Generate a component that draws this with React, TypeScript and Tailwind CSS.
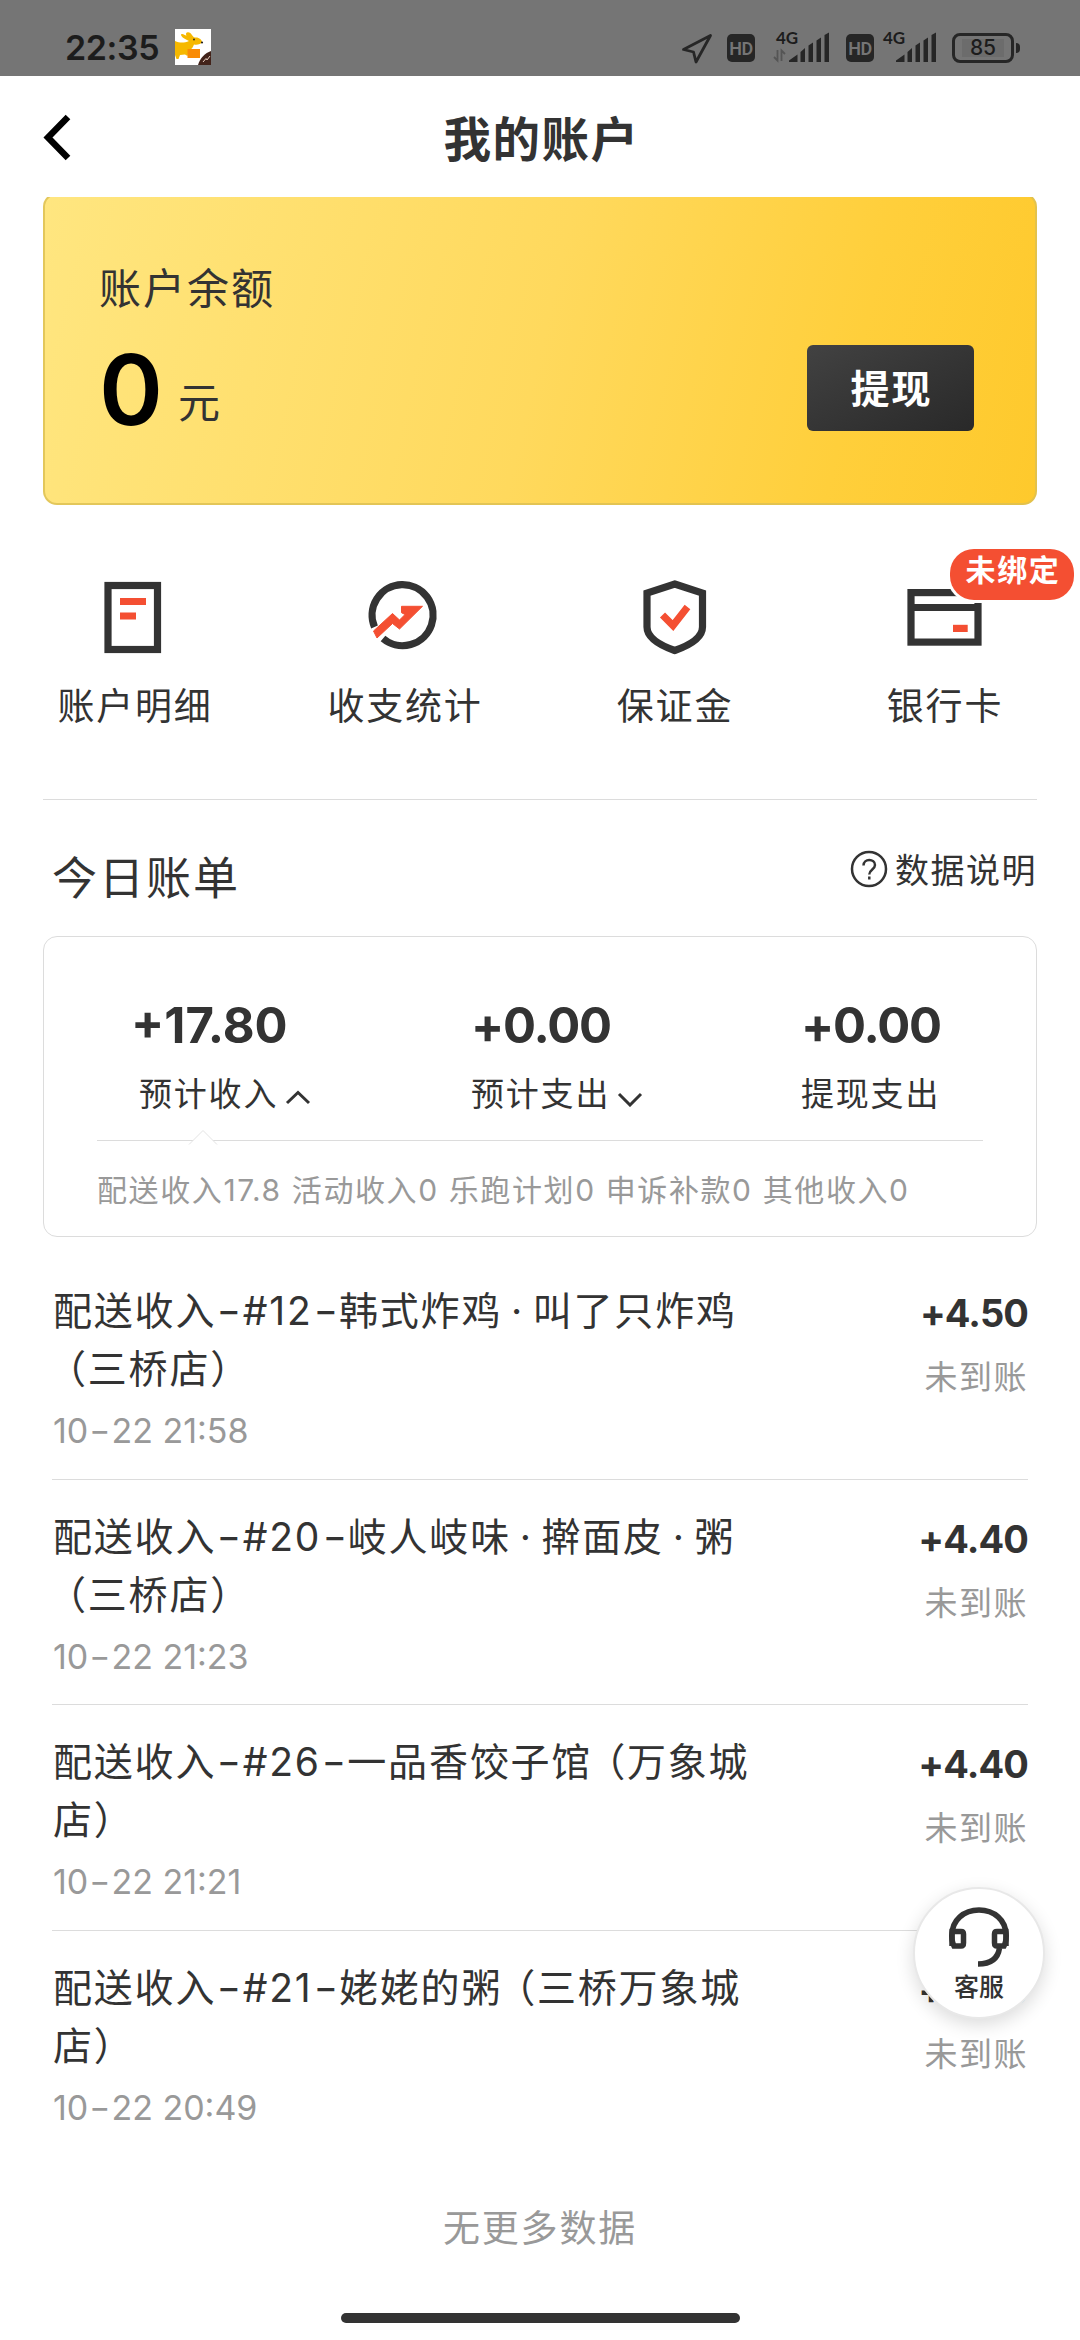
import type { ReactNode } from 'react'

interface Bill {
  title: string[]
  time: string
  amount: string
}

const BILLS: Bill[] = [
  { title: ['配送收入-#12-韩式炸鸡 · 叫了只炸鸡', '（三桥店）'], time: '10-22 21:58', amount: '+4.50' },
  { title: ['配送收入-#20-岐人岐味 · 擀面皮 · 粥', '（三桥店）'], time: '10-22 21:23', amount: '+4.40' },
  { title: ['配送收入-#26-一品香饺子馆（万象城', '店）'], time: '10-22 21:21', amount: '+4.40' },
  { title: ['配送收入-#21-姥姥的粥（三桥万象城', '店）'], time: '10-22 20:49', amount: '+4.40' },
]

// Stretches hyphens to digit width and pulls opening brackets in a little.
function Spaced({ text }: { text: string }) {
  return (
    <>
      {text.split(/([-（])/).map((part, i) => {
        if (part === '-') {
          return (
            <span key={i} className="mx-[0.11em] inline-block origin-center scale-x-[1.35] tracking-normal">
              -
            </span>
          )
        }
        if (part === '（') {
          return (
            <span key={i} className="-ml-[6px]">
              （
            </span>
          )
        }
        return <span key={i}>{part}</span>
      })}
    </>
  )
}

function HdIcon() {
  return (
    <span className="flex h-7 w-7 items-center justify-center rounded-[5px] bg-[#262626] font-[Roboto] text-[18px] font-semibold tracking-[-0.5px] text-[#757575]">
      HD
    </span>
  )
}

function Signal({ arrows }: { arrows?: boolean }) {
  return (
    <div className="relative h-[34px] w-[58px]">
      <span className="absolute left-1 top-0 font-[Lato] text-[17px] font-bold leading-[14px] text-[#1c1c1c]">4G</span>
      <svg viewBox="0 0 58 34" className="h-full w-full" fill="#262626">
        {arrows && (
          <path d="M5.5 19V29.5L2 26M9.5 30V19.5L13 23" fill="none" stroke="#555" strokeWidth="1.8" />
        )}
        <path d="M17 31V29.500L25.500 23.500V31Z" />
        <path d="M28.500 31V21L33 17V31Z" />
        <path d="M36.500 31V14.500L41 11.500V31Z" />
        <path d="M44.500 31V9.500L49 6.500V31Z" />
        <path d="M52.500 31V4L57 1.500V31Z" />
      </svg>
    </div>
  )
}

function StatusBar() {
  return (
    <div className="flex h-[76px] items-start bg-[#757575] text-[#1c1c1c]">
      <span className="ml-[65px] mt-[29px] w-[110px] text-[34px] font-semibold leading-[38px] tracking-[-0.4px]">22:35</span>
      <svg viewBox="0 0 36 36" className="mt-[29px] h-9 w-9">
        <rect width="36" height="36" fill="#fff" />
        <path
          d="M0 12C5 14 9 14 14 12C10 10 6 8 6 5.500C8 4 10 7 11.500 6.500C10 4 12 2.500 14 3.500C17 4 17 8 20 8.500C24 8 27 11 27 13C26 15.500 22 16 19 15.500C18 18 17 20 14 21.500L12.500 27L10 25.500L5 26L3.500 30H1.500L0 26Z"
          fill="#f6b800"
        />
        <circle cx="19" cy="10.500" r="0.900" fill="#222" />
        <circle cx="27" cy="13.500" r="1.100" fill="#222" />
        <rect x="12.500" y="20" width="12.500" height="9" fill="#f98b06" />
        <path d="M36 22C30 24 25 29 23 36H36Z" fill="#42231a" />
        <path d="M28 33L31 29.500L32 31L35 27" fill="none" stroke="#e8cfc0" strokeWidth="1" />
      </svg>
      <svg viewBox="0 0 32 32" className="ml-[470px] mt-8 h-8 w-8">
        <path d="M29.500 3.500L2.500 17.500L12.500 20L15 30L29.500 3.500Z" fill="none" stroke="#262626" strokeWidth="2.800" strokeLinejoin="round" />
      </svg>
      <div className="ml-[14px] mt-[34px]">
        <HdIcon />
      </div>
      <div className="ml-[17px] mt-[31px]">
        <Signal arrows />
      </div>
      <div className="ml-4 mt-[34px]">
        <HdIcon />
      </div>
      <div className="ml-[5px] mt-[31px]">
        <Signal />
      </div>
      <div className="ml-[15px] mt-[33px] flex items-center">
        <div className="flex h-[30px] w-[62px] items-center justify-center rounded-[8px] border-[3.5px] border-[#262626]">
          <span className="bg-[#6c6c6c] px-2 text-[21px] font-medium leading-[18px]">85</span>
        </div>
        <div className="ml-[2px] h-[10px] w-1 rounded-r-sm bg-[#262626]" />
      </div>
    </div>
  )
}

function Header() {
  return (
    <div className="relative flex h-[121px] items-center justify-center">
      <svg viewBox="0 0 30 50" className="absolute left-[42px] top-[36px] h-[50px] w-[30px]">
        <path d="M26 5L6 25.500L26 46" fill="none" stroke="#000" strokeWidth="6.500" />
      </svg>
      <h1 className="pl-[3px] pt-[7px] text-[47.5px] font-bold leading-[60px] tracking-[1.5px]">我的账户</h1>
    </div>
  )
}

function Balance() {
  return (
    <div className="mx-[43px] h-[308px] overflow-hidden">
      <div className="-mt-1 flex h-[312px] items-start justify-between rounded-[14px] border-2 border-[#dcbf52]/80 bg-[linear-gradient(103deg,#ffe680_0%,#ffd95d_50%,#ffcf3b_80%,#fec92c_100%)] bg-origin-border">
        <div className="ml-[54px] mt-[66px]">
          <div className="text-[42px] leading-[56px] tracking-[2px]">账户余额</div>
          <div className="flex items-baseline">
            <span className="text-[97px] font-semibold leading-[146px] tracking-[-4px] text-black">0</span>
            <span className="relative -top-[7px] ml-[19px] text-[42px]">元</span>
          </div>
        </div>
        <button className="mr-[61px] mt-[150px] flex h-[86px] w-[167px] items-center justify-center rounded-[6px] bg-linear-to-br from-[#424242] to-[#292929] pl-[2px] pt-[2px] text-[39px] font-bold tracking-[2px] text-white">
          提现
        </button>
      </div>
    </div>
  )
}

function MenuItem({ label, badge, children }: { label: string; badge?: string; children: ReactNode }) {
  return (
    <div className="relative flex w-[270px] flex-col items-center">
      <svg viewBox="0 0 80 80" className="h-20 w-20" fill="none" stroke="#333" strokeWidth="7.200">
        {children}
      </svg>
      <span className="mt-[26px] text-[37px] leading-[50px] tracking-[1.8px]">{label}</span>
      {badge && (
        <span className="absolute -top-[27px] left-[140px] flex h-[51px] w-[124px] justify-center rounded-[24px] bg-[#f44f32] pl-[2px] text-[30px] font-bold leading-[42px] tracking-[1.7px] text-white ring-3 ring-white">
          {badge}
        </span>
      )}
    </div>
  )
}

function Menu() {
  return (
    <div className="mt-[71px] flex h-[223px]">
      <MenuItem label="账户明细">
        <rect x="13" y="9.500" width="49.500" height="64" />
        <path d="M25 25.500H51M25 40H41" stroke="#f44f32" />
      </MenuItem>
      <MenuItem label="收支统计">
        <path d="M9.500 51A30.500 30.500 0 1 1 18 62.500" />
        <path
          d="M8.500 55L27.500 37.500L34.500 44L40 38.500L36.500 36.700V30.300H57.500L34.500 53L27.500 47.500L12 62Z"
          fill="#f44f32"
          stroke="#f44f32"
          strokeWidth="1"
        />
      </MenuItem>
      <MenuItem label="保证金">
        <path d="M39.700 8L67.500 17V51C67.500 62 54 69.500 39.700 74.500C25.500 69.500 12 62 12 51V17Z" />
        <path d="M27.500 39L38 49.500L52.500 31" stroke="#f44f32" />
      </MenuItem>
      <MenuItem label="银行卡" badge="未绑定">
        <rect x="6" y="16.600" width="67" height="49.500" />
        <path d="M6 31.500H73" />
        <path d="M48 52.400H62.700" stroke="#f44f32" />
      </MenuItem>
    </div>
  )
}

function Stat({ value, label, arrow, className }: { value: string; label: string; arrow?: 'up' | 'down'; className: string }) {
  return (
    <div className={className}>
      <div className="text-[49px] font-bold leading-[60px]">{value}</div>
      <div className={arrow === 'up' ? 'flex items-center pl-2 pt-[16px]' : 'flex items-center pt-[16px]'}>
        <span className="text-[33px] leading-[44px] tracking-[1.8px]">{label}</span>
        {arrow && (
          <svg viewBox="0 0 26 18" className="ml-[7px] mt-[7px] h-[18px] w-[26px]" fill="none" stroke="#333" strokeWidth="3">
            <path d={arrow === 'up' ? 'M2 14L13 3.500L24 14' : 'M2 5L13 16L24 5'} />
          </svg>
        )}
      </div>
    </div>
  )
}

function Today() {
  return (
    <>
      <div className="mx-[43px] border-t border-[#dcdcdc]" />
      <div className="flex h-[136px] items-start justify-between pl-[52px] pr-[43px]">
        <h2 className="mt-[49px] text-[45px] leading-[60px] tracking-[2px]">今日账单</h2>
        <div className="mt-[47px] flex items-center">
          <svg viewBox="0 0 38 38" className="mb-[5px] mr-[7px] h-[38px] w-[38px]" fill="none" stroke="#333" strokeWidth="2.500">
            <circle cx="19" cy="19" r="17" />
            <path d="M13.500 15.500C13.500 8 25 8.500 25 15C25 19.500 19.300 19.500 19.300 24.500" />
            <path d="M19.300 26.500V29.500" />
          </svg>
          <span className="text-[34px] leading-[48px] tracking-[1.5px]">数据说明</span>
        </div>
      </div>
      <div className="mx-[43px] h-[301px] rounded-[14px] border border-[#dcdcdc] px-[53px] pt-[59px]">
        <div className="flex">
          <Stat value="+17.80" label="预计收入" arrow="up" className="ml-[34px] w-[340px] tracking-normal" />
          <Stat value="+0.00" label="预计支出" arrow="down" className="w-[330px] tracking-[-1.2px]" />
          <Stat value="+0.00" label="提现支出" className="w-[140px] tracking-[-1.2px]" />
        </div>
        <div className="relative mt-[24px] border-t border-[#dcdcdc]">
          <svg viewBox="0 0 30 17" className="absolute -top-[12px] left-[91px] h-[17px] w-[30px]">
            <path d="M1 15.500L15 1.500L29 15.500" fill="#fff" stroke="#e4e4e4" />
          </svg>
        </div>
        <p className="mt-[27px] whitespace-nowrap text-[30px] leading-[44px] tracking-[1.6px] text-[#999]">
          配送收入17.8 活动收入0 乐跑计划0 申诉补款0 其他收入0
        </p>
      </div>
    </>
  )
}

function BillRow({ bill, last }: { bill: Bill; last: boolean }) {
  return (
    <li
      className={
        last
          ? 'flex h-[225.500px] justify-between'
          : 'flex h-[225.500px] justify-between border-b border-[#dcdcdc]'
      }
    >
      <div className="pl-px pt-[28px]">
        {bill.title.map((line) => (
          <div key={line} className="whitespace-nowrap text-[39px] leading-[58px] tracking-[1.8px] [word-spacing:-4px]">
            <Spaced text={line} />
          </div>
        ))}
        <div className="mt-[10px] text-[34px] leading-[46px] text-[#999]">
          <Spaced text={bill.time} />
        </div>
      </div>
      <div className="pt-[31px] text-right">
        <div className="text-[38px] font-bold leading-[56px] tracking-[-0.9px]">{bill.amount}</div>
        <div className="mt-[13px] text-[33px] leading-[46px] tracking-[1.5px] text-[#999]">未到账</div>
      </div>
    </li>
  )
}

function ServiceButton() {
  return (
    <button className="absolute left-[913px] top-[1887px] flex h-[132px] w-[132px] flex-col items-center rounded-full border-2 border-[#e8e8e8] bg-white pt-[16px] shadow-[0_6px_18px_rgba(0,0,0,0.14)]">
      <svg viewBox="0 0 64 64" className="h-16 w-16" fill="none" stroke="#333" strokeWidth="5.500">
        <path d="M5 41V30C5 15 17 5 32 5C47 5 59 15 59 30V41" />
        <path d="M5 26.500H14C16 26.500 16.500 27 16.500 29V38C16.500 40.500 16 41 14 41H7C5 37 4.500 31 5 26.500Z" />
        <path d="M59 26.500H50C48 26.500 47.500 27 47.500 29V38C47.500 40.500 48 41 50 41H57C59 37 59.500 31 59 26.500Z" />
        <path d="M52.500 43C51 53 45 59 31 59" />
      </svg>
      <span className="mt-px text-[25px] font-medium leading-[34px]">客服</span>
    </button>
  )
}

export default function App() {
  return (
    <div className="relative flex h-[2340px] w-[1080px] flex-col overflow-hidden bg-white font-[Inter,'Noto_Sans_CJK_SC',sans-serif] text-[#333]">
      <StatusBar />
      <Header />
      <Balance />
      <Menu />
      <Today />
      <ul className="ml-[52px] mr-[52px] mt-[17px]">
        {BILLS.map((bill, i) => (
          <BillRow key={bill.time} bill={bill} last={i === BILLS.length - 1} />
        ))}
      </ul>
      <div className="mt-[48px] text-center text-[37px] leading-[50px] tracking-[1.8px] text-[#999]">无更多数据</div>
      <div className="mx-auto mb-[17px] mt-auto h-[10px] w-[399px] rounded-full bg-[#333]" />
      <ServiceButton />
    </div>
  )
}
